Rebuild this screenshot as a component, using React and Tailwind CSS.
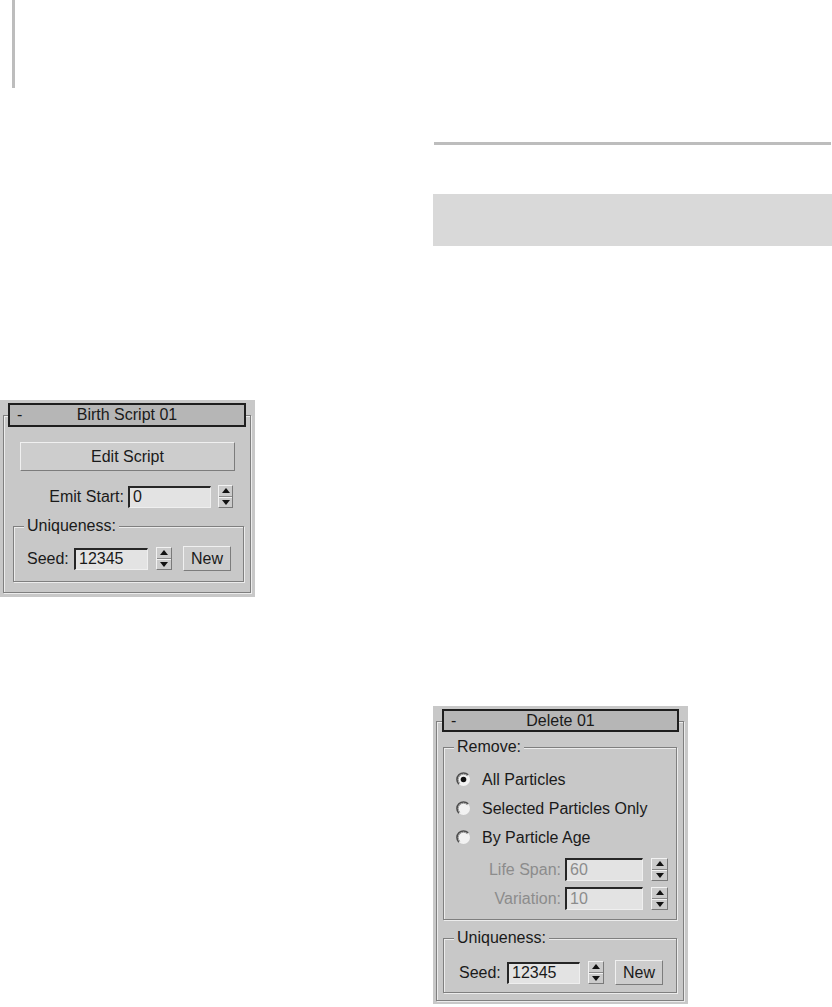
import React from 'react';

const font = { fontFamily: '"Liberation Sans", Arial, sans-serif' };

function TitleBar({ title, className }) {
  return (
    <div className={`relative flex items-center justify-center border-2 border-[#1e1e1e] bg-[#b6b6b6] text-[16px] text-[#1a1a1a] ${className}`}>
      <span className="absolute left-[7px] top-[1px] leading-[18px]">-</span>
      <span className="leading-none">{title}</span>
    </div>
  );
}

function Field({ value, disabled, className }) {
  return (
    <div
      className={`flex items-center border-t-2 border-l-2 border-r border-b border-t-[#262626] border-l-[#262626] border-r-[#efefef] border-b-[#efefef] bg-[#e3e3e3] pl-[3px] text-[16px] leading-none ${disabled ? 'text-[#8c8c8c]' : 'text-[#1a1a1a]'} ${className}`}
    >
      {value}
    </div>
  );
}

function Spinner({ className }) {
  return (
    <div className={`flex flex-col border border-t-[#f2f2f2] border-l-[#f2f2f2] border-r-[#7a7a7a] border-b-[#7a7a7a] bg-[#cbcbcb] ${className}`}>
      <div className="flex flex-1 items-center justify-center border-b border-[#8a8a8a]">
        <svg width="8" height="5" viewBox="0 0 8 5">
          <path d="M4 0 L8 5 L0 5 Z" fill="#111" />
        </svg>
      </div>
      <div className="flex flex-1 items-center justify-center border-t border-[#f2f2f2]">
        <svg width="8" height="5" viewBox="0 0 8 5">
          <path d="M0 0 L8 0 L4 5 Z" fill="#111" />
        </svg>
      </div>
    </div>
  );
}

function Btn({ children, className }) {
  return (
    <div className={`flex items-center justify-center border border-t-[#f0f0f0] border-l-[#f0f0f0] border-r-[#7c7c7c] border-b-[#7c7c7c] bg-[#cdcdcd] text-[16px] leading-none text-[#1a1a1a] ${className}`}>
      {children}
    </div>
  );
}

function Group({ label, className, children }) {
  return (
    <div className={`relative border border-[#7f7f7f] shadow-[inset_1px_1px_0_#ececec,1px_1px_0_#ececec] ${className}`}>
      <span className="absolute left-[10px] top-[-10px] bg-[#c8c8c8] px-[3px] text-[16px] leading-[18px] text-[#1a1a1a]">
        {label}
      </span>
      {children}
    </div>
  );
}

function Radio({ checked, label }) {
  return (
    <div className="flex h-[29px] items-center">
      <svg width="15" height="15" viewBox="0 0 15 15" className="ml-[12px]">
        <circle cx="7.5" cy="7.5" r="6.5" fill="#f2f2f2" />
        <path d="M2.9 12.1 A6.5 6.5 0 0 1 12.1 2.9" fill="none" stroke="#4e4e4e" strokeWidth="1.7" />
        <path d="M3.8 11.2 A5.2 5.2 0 0 1 11.2 3.8" fill="none" stroke="#9a9a9a" strokeWidth="1" />
        {checked && <circle cx="7.5" cy="7.5" r="2.8" fill="#111" />}
      </svg>
      <span className="ml-[11px] text-[16px] leading-none text-[#1a1a1a]">{label}</span>
    </div>
  );
}

function BirthScript() {
  return (
    <div className="h-[197px] w-[255px] bg-[#c8c8c8] pl-[3px] pt-[15px]">
      <div className="h-[178px] w-[248px] border border-[#7f7f7f] shadow-[inset_1px_1px_0_#ececec,1px_1px_0_#ececec]">
        <TitleBar title="Birth Script 01" className="-mt-[13px] ml-[4px] h-[24px] w-[238px]" />
        <Btn className="ml-[16px] mt-[15px] h-[29px] w-[215px]">Edit Script</Btn>
        <div className="mt-[14px] flex items-center">
          <span className="w-[120px] text-right text-[16px] leading-none text-[#1a1a1a]">Emit Start:</span>
          <Field value="0" className="ml-[4px] h-[22px] w-[83px]" />
          <Spinner className="ml-[7px] h-[23px] w-[15px]" />
        </div>
        <Group label="Uniqueness:" className="ml-[9px] mt-[18px] h-[56px] w-[231px]">
          <div className="flex items-center pl-[13px] pt-[19px]">
            <span className="w-[47px] text-[16px] leading-none text-[#1a1a1a]">Seed:</span>
            <Field value="12345" className="h-[22px] w-[74px]" />
            <Spinner className="ml-[8px] h-[23px] w-[16px]" />
            <Btn className="ml-[11px] h-[25px] w-[48px]">New</Btn>
          </div>
        </Group>
      </div>
    </div>
  );
}

function Delete() {
  return (
    <div className="h-[298px] w-[255px] bg-[#c8c8c8] pl-[3px] pt-[15px]">
      <div className="h-[280px] w-[248px] border border-[#7f7f7f] shadow-[inset_1px_1px_0_#ececec,1px_1px_0_#ececec]">
        <TitleBar title="Delete 01" className="-mt-[13px] ml-[5px] h-[23px] w-[237px]" />
        <Group label="Remove:" className="ml-[6px] mt-[15px] h-[173px] w-[234px]">
          <div className="pt-[17px]">
            <Radio checked label="All Particles" />
            <Radio label="Selected Particles Only" />
            <Radio label="By Particle Age" />
            <div className="mt-[6px] flex items-center">
              <span className="w-[117px] text-right text-[16px] leading-none text-[#8c8c8c]">Life Span:</span>
              <Field disabled value="60" className="ml-[4px] h-[23px] w-[78px]" />
              <Spinner className="ml-[8px] h-[23px] w-[17px]" />
            </div>
            <div className="mt-[6px] flex items-center">
              <span className="w-[117px] text-right text-[16px] leading-none text-[#8c8c8c]">Variation:</span>
              <Field disabled value="10" className="ml-[4px] h-[23px] w-[78px]" />
              <Spinner className="ml-[8px] h-[23px] w-[17px]" />
            </div>
          </div>
        </Group>
        <Group label="Uniqueness:" className="ml-[6px] mt-[18px] h-[55px] w-[234px]">
          <div className="flex items-center pl-[15px] pt-[21px]">
            <span className="w-[48px] text-[16px] leading-none text-[#1a1a1a]">Seed:</span>
            <Field value="12345" className="h-[22px] w-[73px]" />
            <Spinner className="ml-[8px] h-[23px] w-[16px]" />
            <Btn className="ml-[11px] h-[25px] w-[48px]">New</Btn>
          </div>
        </Group>
      </div>
    </div>
  );
}

export default function App() {
  return (
    <div className="flex h-[1007px] w-[832px] overflow-hidden bg-white" style={font}>
      <div className="flex w-[432px] shrink-0 flex-col">
        <div className="ml-[12px] h-[88px] w-[3px] bg-[#bdbdbd]" />
        <div className="mt-[312px]">
          <BirthScript />
        </div>
      </div>
      <div className="flex w-[400px] shrink-0 flex-col">
        <div className="ml-[2px] mt-[142px] h-[3px] w-[397px] bg-[#bdbdbd]" />
        <div className="ml-[1px] mt-[49px] h-[52px] w-[399px] bg-[#d9d9d9]" />
        <div className="ml-[1px] mt-[460px]">
          <Delete />
        </div>
      </div>
    </div>
  );
}
